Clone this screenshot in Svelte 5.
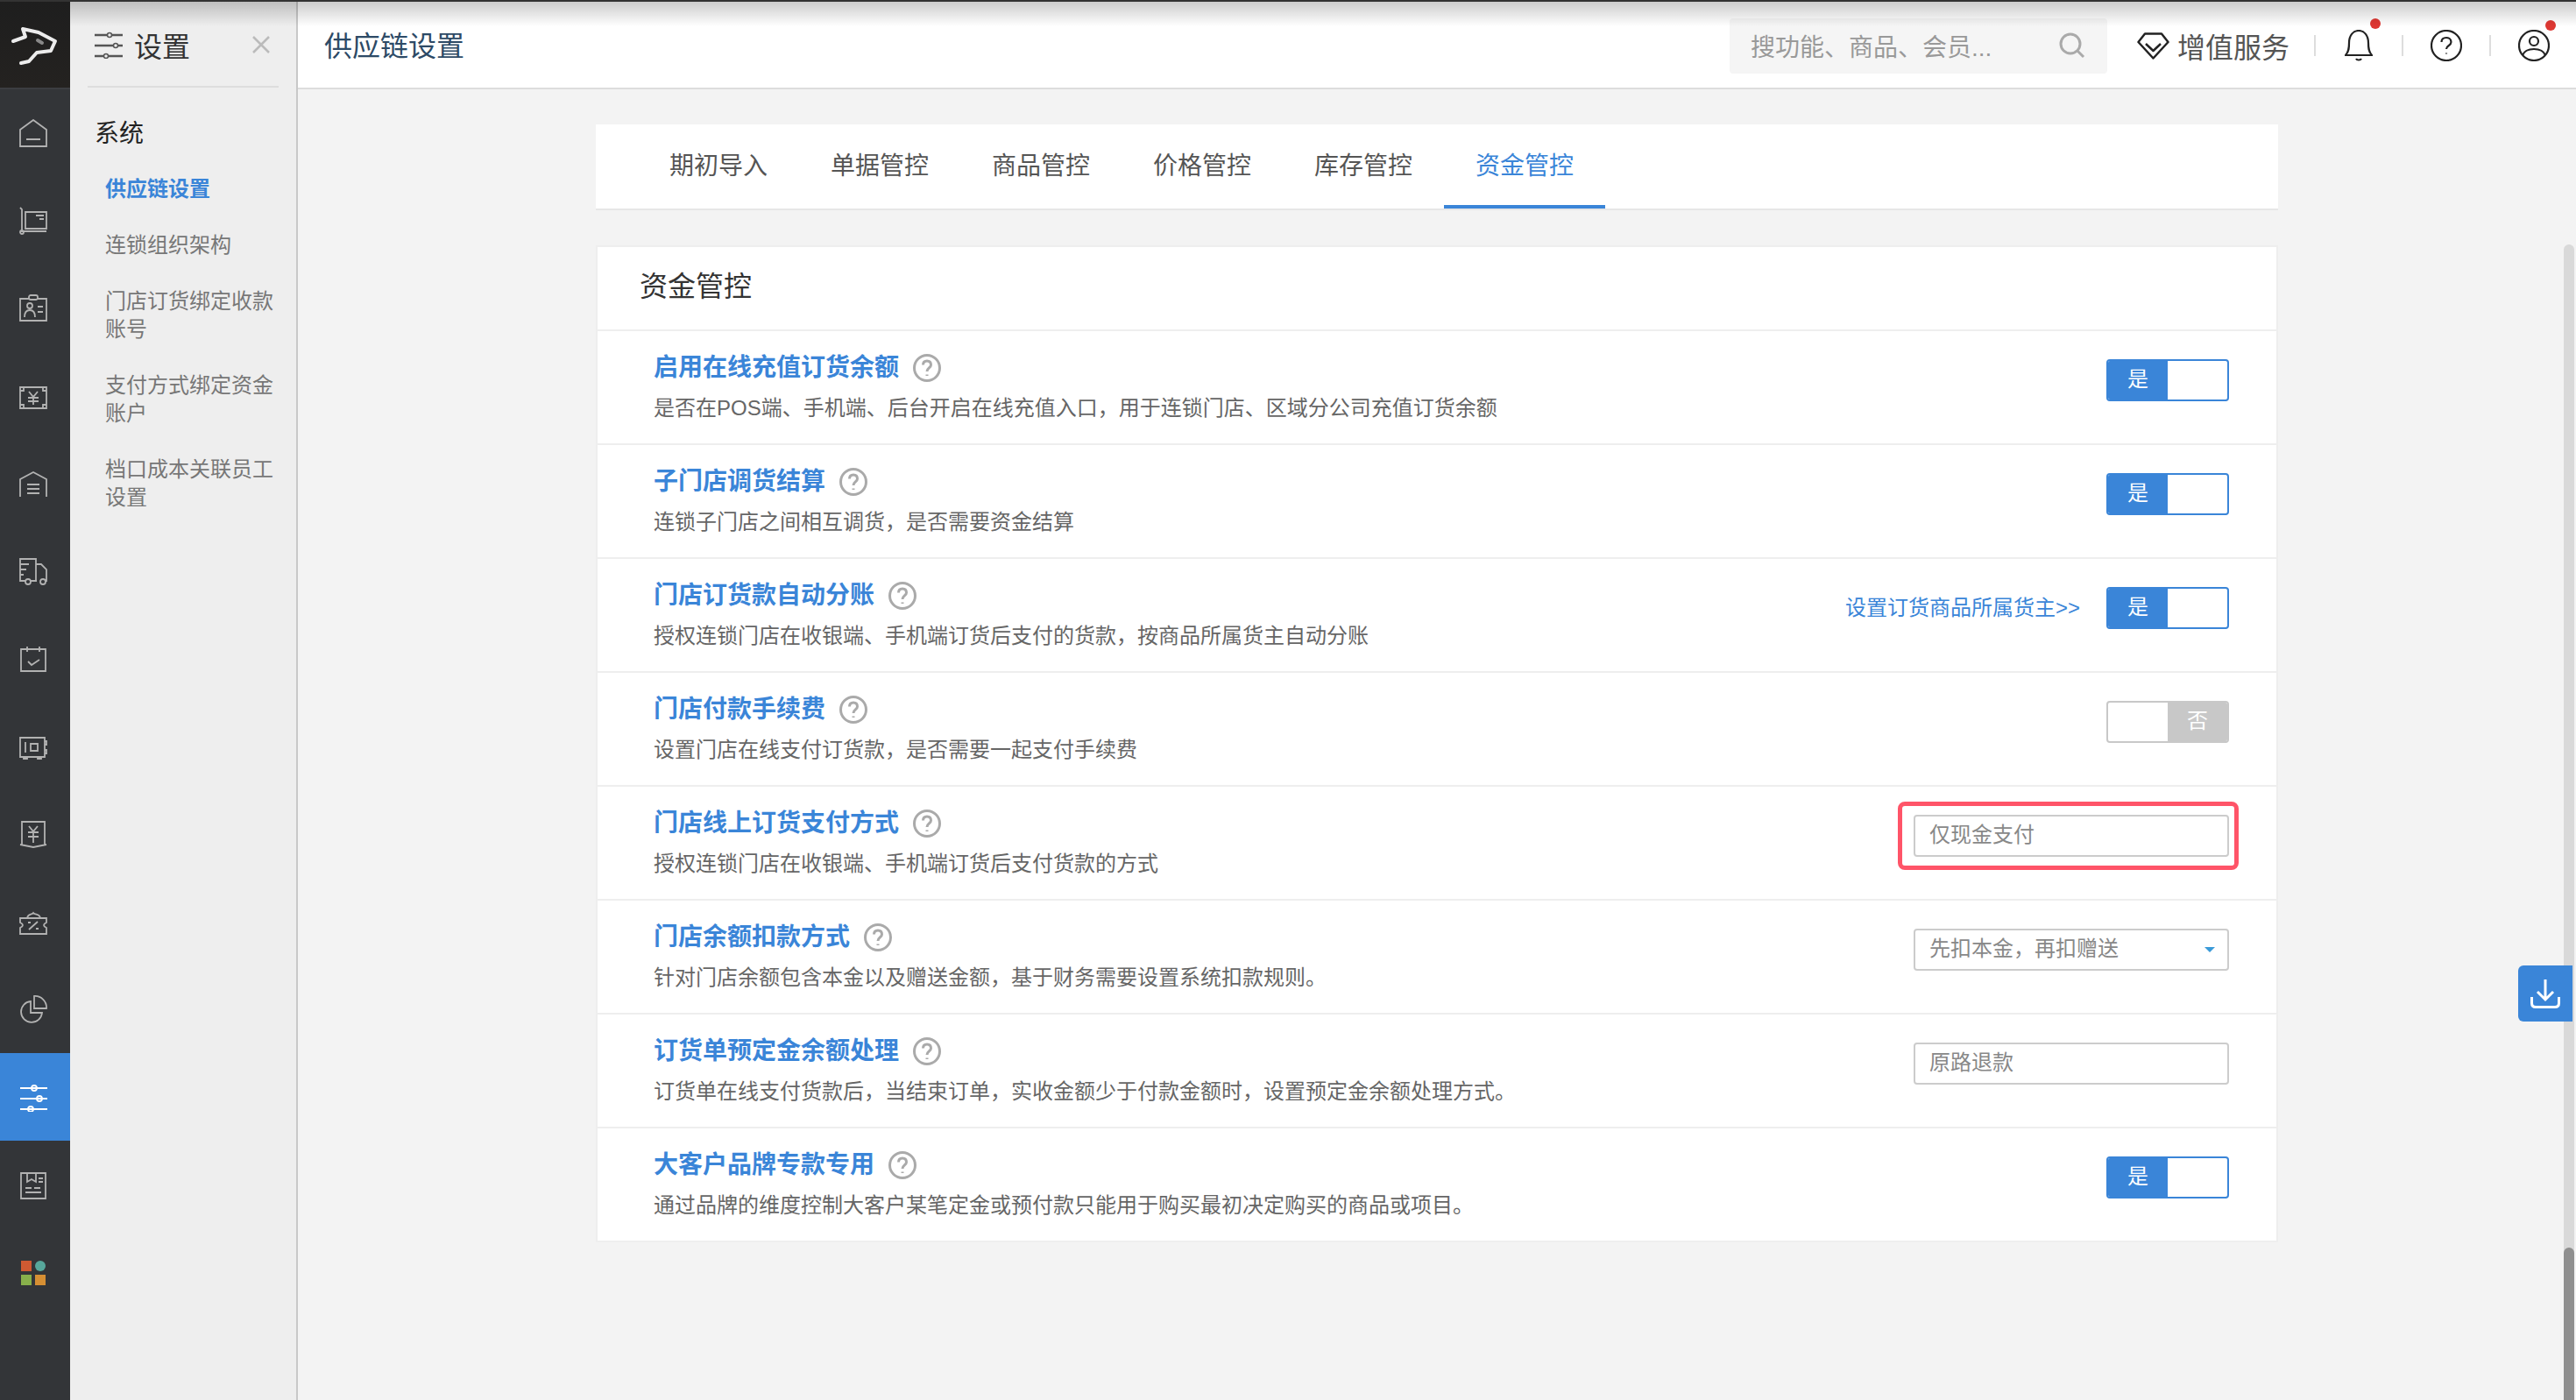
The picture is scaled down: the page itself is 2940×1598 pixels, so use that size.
<script>
  const railIcons = [
    'M1 12 16 1 31 12V31H1ZM8 23H24',
    'M1 1 3 3V28H31M5 29a2 2 0 1 1-4 0 2 2 0 0 1 4 0M7 6H31V25H7ZM19 10H28M23 14H28',
    'M11 5H1V30H31V5H21M11 3a2 2 0 0 1 2-2h6a2 2 0 0 1 2 2v1a2 2 0 0 1-2 2h-6a2 2 0 0 1-2-2ZM15 13a3 3 0 1 1-6 0 3 3 0 0 1 6 0M6 26c0-6 3-8 6-8s6 2 6 8M21 14H27M21 20H27',
    'M1 6H31V30H1ZM1 10H5V6M27 6V10H31M1 26H5V30M27 30V26H31M11 11l5 6 5-6M10 18H22M10 22H22M16 17V26',
    'M1 31V11L16 3 31 11V31M9 17H23M9 22H23M9 27H23',
    'M7 27H1V2H19V27H13M19 8H25L31 14V27H30M19 27H20M1 8H11M1 14H8M1 20H5M13 28a3 3 0 1 1-6 0 3 3 0 0 1 6 0M30 28a3 3 0 1 1-6 0 3 3 0 0 1 6 0',
    'M2 5H30V30H2ZM9 2V8M23 2V8M10 19l4 4 9-6',
    'M1 6H29V28H1ZM29 10H31V14H29M29 20H31V24H29M7 11V23M13 13H21V21H13ZM5 28V30H9V28M21 28V30H25V28',
    'M3 28V2H29V28M1 28 16 31 31 28M11 7l5 6 5-6M10 14H22M10 19H22M16 13V26',
    'M1 12H31V17C27 19 27 21 31 23V30H1V23C5 21 5 19 1 17ZM9 12C10 6 14 9 16 6 18 9 23 6 24 12M11 25 21 16M10 17h3M19 24h3',
    'M13 7A12 12 0 1 0 26 20H13ZM17 1A13 13 0 0 1 31 15H17Z',
    'M1 6H32M1 18H32M1 30H32M20 6a3 3 0 1 1-6 0 3 3 0 0 1 6 0M26 18a3 3 0 1 1-6 0 3 3 0 0 1 6 0M16 30a3 3 0 1 1-6 0 3 3 0 0 1 6 0',
    'M2 3H30V32H2ZM9 3V13L14 10 19 13V3M22 9H27M22 13H27M7 20H14M17 20H24M7 25H25',
  ];
  const activeRail = 11;

  const sideItems = [
    { label: '供应链设置', active: true },
    { label: '连锁组织架构' },
    { label: '门店订货绑定收款账号' },
    { label: '支付方式绑定资金账户' },
    { label: '档口成本关联员工设置' },
  ];

  const tabs = ['期初导入', '单据管控', '商品管控', '价格管控', '库存管控', '资金管控'];
  const activeTab = 5;

  const rows = [
    { title: '启用在线充值订货余额', desc: '是否在POS端、手机端、后台开启在线充值入口，用于连锁门店、区域分公司充值订货余额', type: 'on' },
    { title: '子门店调货结算', desc: '连锁子门店之间相互调货，是否需要资金结算', type: 'on' },
    { title: '门店订货款自动分账', desc: '授权连锁门店在收银端、手机端订货后支付的货款，按商品所属货主自动分账', type: 'on', link: '设置订货商品所属货主>>' },
    { title: '门店付款手续费', desc: '设置门店在线支付订货款，是否需要一起支付手续费', type: 'off' },
    { title: '门店线上订货支付方式', desc: '授权连锁门店在收银端、手机端订货后支付货款的方式', type: 'field', value: '仅现金支付', marked: true },
    { title: '门店余额扣款方式', desc: '针对门店余额包含本金以及赠送金额，基于财务需要设置系统扣款规则。', type: 'select', value: '先扣本金，再扣赠送' },
    { title: '订货单预定金余额处理', desc: '订货单在线支付货款后，当结束订单，实收金额少于付款金额时，设置预定金余额处理方式。', type: 'field', value: '原路退款' },
    { title: '大客户品牌专款专用', desc: '通过品牌的维度控制大客户某笔定金或预付款只能用于购买最初决定购买的商品或项目。', type: 'on' },
  ];
</script>

<div class="app">
  <nav class="rail">
    <div class="logo">
      <svg viewBox="0 0 80 100" width="80" height="100">
        <path d="M15 47 29 42 26 33 44 37 63 47 58 58 42 60 33 70 24 72" />
        <path class="eye" d="M43 46 48 49" />
      </svg>
    </div>
    {#each railIcons as d, i}
      <div class="rail-item" class:active={i === activeRail}>
        <svg viewBox="0 0 33 33" width="33" height="33"><path {d} /></svg>
      </div>
    {/each}
    <div class="rail-item">
      <svg viewBox="0 0 32 32" width="32" height="32" class="apps">
        <rect x="2" y="3" width="12" height="12" fill="#cf5a32" />
        <ellipse cx="24" cy="9" rx="6" ry="6" fill="#57a79b" />
        <rect x="2" y="19" width="12" height="12" fill="#88b04b" />
        <rect x="18" y="19" width="12" height="12" fill="#d68f33" />
      </svg>
    </div>
  </nav>

  <aside class="sidebar">
    <div class="side-head">
      <svg class="side-icon" viewBox="0 0 32 32" width="32" height="32">
        <path d="M0 5H32M0 17H32M0 29H32" />
        <circle cx="17" cy="5" r="2.500" />
        <circle cx="24" cy="17" r="2.500" />
        <circle cx="13" cy="29" r="2.500" />
      </svg>
      <span class="side-title">设置</span>
      <svg class="side-close" viewBox="0 0 20 20" width="20" height="20"><path d="M1 1 19 19M19 1 1 19" /></svg>
    </div>
    <div class="side-section">系统</div>
    <ul class="side-list">
      {#each sideItems as item}
        <li class:active={item.active}>{item.label}</li>
      {/each}
    </ul>
  </aside>

  <div class="main">
    <header class="topbar">
      <h1>供应链设置</h1>
      <div class="search">
        <span>搜功能、商品、会员...</span>
        <svg viewBox="0 0 30 30" width="30" height="30"><path d="M24 13a11 11 0 1 1-22 0 11 11 0 0 1 22 0M21 21 28 28" /></svg>
      </div>
      <div class="service">
        <svg viewBox="0 0 37 31" width="37" height="31"><path d="M9 1.5H28L35.5 11 18.5 29.5 1.5 11ZM10 13 18.5 21 27 13" /></svg>
        <span>增值服务</span>
      </div>
      <i class="sep"></i>
      <div class="tool">
        <span class="tool-icon">
          <svg viewBox="0 0 32 36" width="32" height="36"><path d="M1 29C5 25 5 20 5 15 5 6 10 1 16 1S27 6 27 15C27 20 27 25 31 29ZM13 33C14 35 18 35 19 33" /></svg>
          <b class="dot bell-dot"></b>
        </span>
      </div>
      <i class="sep"></i>
      <div class="tool">
        <span class="tool-icon">
          <svg viewBox="0 0 36 36" width="36" height="36"><circle cx="18" cy="18" r="17" /><path d="M12.5 14C12.5 10.5 15 9 18 9S23.500 11 23.500 14C23.500 18 18 18 18 22" /><path d="M18 26.500V27.500" /></svg>
        </span>
      </div>
      <i class="sep"></i>
      <div class="tool last">
        <span class="tool-icon">
          <svg viewBox="0 0 36 36" width="36" height="36"><circle cx="18" cy="18" r="17" /><circle cx="18" cy="13" r="5" /><path d="M5 29C7 24 12 22 18 22S29 24 31 29" /></svg>
          <b class="dot user-dot"></b>
        </span>
      </div>
    </header>

    <div class="content">
      <div class="tabs">
        {#each tabs as tab, i}
          <div class="tab" class:active={i === activeTab}>{tab}</div>
        {/each}
      </div>

      <section class="panel">
        <h2>资金管控</h2>
        {#each rows as row}
          <div class="row">
            <div class="row-text">
              <div class="row-title">
                <span>{row.title}</span>
                <svg viewBox="0 0 32 32" width="32" height="32">
                  <circle cx="16" cy="16" r="14.500" />
                  <path d="M11.500 12.500C11.500 9.500 13.500 8 16 8S20.500 9.500 20.500 12.500C20.500 16 16 16 16 20M16 23.500V25" />
                </svg>
              </div>
              <div class="row-desc">{row.desc}</div>
            </div>
            <div class="row-control">
              {#if row.link}
                <span class="row-link">{row.link}</span>
              {/if}
              {#if row.type === 'on'}
                <div class="toggle on"><span>是</span><span></span></div>
              {:else if row.type === 'off'}
                <div class="toggle off"><span></span><span>否</span></div>
              {:else}
                <div class="field" class:marked={row.marked}>
                  {row.value}
                  {#if row.type === 'select'}<i class="caret"></i>{/if}
                </div>
              {/if}
            </div>
          </div>
        {/each}
      </section>
    </div>

    <div class="scroll-track"><div class="scroll-thumb"></div></div>
    <div class="download">
      <svg viewBox="0 0 34 34" width="34" height="34"><path d="M17 1V23M8 15 17 24 26 15M1.500 21V28C1.500 31 3 32.500 6 32.500H28C31 32.500 32.500 31 32.500 28V21" /></svg>
    </div>
  </div>

  <div class="top-strip"></div>
  <div class="top-shade"></div>
</div>

<style>
  :global(body) {
    margin: 0;
    background: #f3f3f3;
    font-family: "Liberation Sans", "Noto Sans CJK SC", sans-serif;
  }

  .app {
    display: flex;
    height: 100vh;
    overflow: hidden;
    position: relative;
  }

  .top-strip {
    position: absolute;
    top: 0;
    left: 0;
    right: 0;
    height: 2px;
    background: #333;
  }

  .top-shade {
    position: absolute;
    top: 2px;
    left: 80px;
    right: 0;
    height: 28px;
    background: linear-gradient(to bottom, rgba(0, 0, 0, 0.2), rgba(0, 0, 0, 0));
    pointer-events: none;
  }

  /* icon rail */
  .rail {
    width: 80px;
    flex: none;
    background: #333538;
  }

  .logo {
    height: 100px;
    margin-bottom: 2px;
    background: linear-gradient(to bottom, #1e1e1e, #242220);
    box-shadow: 0 2px 0 #3c3e41;
  }

  .logo svg {
    display: block;
  }

  .logo path {
    fill: none;
    stroke: #ececec;
    stroke-width: 4;
    stroke-linejoin: round;
    stroke-linecap: round;
  }

  .logo path.eye {
    stroke: #888;
  }

  .rail-item {
    height: 100px;
    display: flex;
    align-items: center;
    justify-content: center;
    padding-right: 4px;
    box-sizing: border-box;
  }

  .rail-item path {
    fill: none;
    stroke: #b2b2b2;
    stroke-width: 1.8;
  }

  .rail-item.active {
    background: #3a85d8;
  }

  .rail-item.active path {
    stroke: #fff;
  }

  /* second level sidebar */
  .sidebar {
    width: 260px;
    flex: none;
    box-sizing: border-box;
    background: #eee;
    border-right: 2px solid #c8c8c8;
  }

  .side-head {
    height: 100px;
    margin: 0 20px;
    padding: 4px 10px 0 8px;
    box-sizing: border-box;
    display: flex;
    align-items: center;
    border-bottom: 2px solid #ddd;
  }

  .side-icon path {
    fill: none;
    stroke: #555;
    stroke-width: 2.500;
  }

  .side-icon circle {
    fill: #eee;
    stroke: #555;
    stroke-width: 1.500;
  }

  .side-title {
    margin-left: 13px;
    font-size: 32px;
    color: #333;
  }

  .side-close {
    margin-left: auto;
  }

  .side-close path {
    fill: none;
    stroke: #bbb;
    stroke-width: 2.500;
  }

  .side-section {
    margin: 35px 0 29px 28px;
    font-size: 28px;
    line-height: 36px;
    color: #222;
  }

  .side-list {
    list-style: none;
    margin: 0;
    padding: 0 18px 0 40px;
    font-size: 24px;
    line-height: 32px;
    color: #777;
  }

  .side-list li {
    margin-bottom: 32px;
  }

  .side-list li.active {
    color: #3a85d8;
    font-weight: 700;
  }

  /* main area */
  .main {
    flex: 1;
    min-width: 0;
    position: relative;
  }

  .topbar {
    height: 102px;
    box-sizing: border-box;
    padding: 4px 0 0 30px;
    display: flex;
    align-items: center;
    background: #fff;
    border-bottom: 2px solid #ddd;
  }

  .topbar h1 {
    margin: 0;
    font-size: 32px;
    font-weight: 400;
    color: #2d4a66;
    position: relative;
    top: -2px;
  }

  .search {
    margin-left: auto;
    width: 431px;
    height: 63px;
    box-sizing: border-box;
    padding: 0 25px 0 24px;
    display: flex;
    align-items: center;
    justify-content: space-between;
    background: #f5f5f5;
    border-radius: 4px;
    font-size: 28px;
    color: #999;
  }

  .search path {
    fill: none;
    stroke: #aaa;
    stroke-width: 3;
  }

  .service {
    margin-left: 34px;
    display: flex;
    align-items: center;
    gap: 9px;
    font-size: 32px;
    color: #555;
  }

  .service path {
    fill: none;
    stroke: #222;
    stroke-width: 2.500;
    stroke-linejoin: round;
  }

  .sep {
    width: 2px;
    height: 24px;
    background: #ddd;
    flex: none;
  }

  .service + .sep {
    margin-left: 28px;
  }

  .tool {
    width: 98px;
    display: flex;
    justify-content: center;
  }

  .tool.last {
    width: 97px;
  }

  .tool-icon {
    position: relative;
    display: flex;
  }

  .tool svg * {
    fill: none;
    stroke: #222;
    stroke-width: 2.200;
  }

  .dot {
    position: absolute;
    width: 12px;
    height: 12px;
    border-radius: 50%;
    background: #dd3732;
  }

  .bell-dot {
    left: 29px;
    top: -13px;
  }

  .user-dot {
    left: 31px;
    top: -11px;
  }

  .content {
    padding-top: 40px;
  }

  .tabs {
    width: 1920px;
    height: 98px;
    margin: 0 auto 40px;
    padding-left: 48px;
    box-sizing: border-box;
    display: flex;
    background: #fff;
    border-bottom: 2px solid #e6e6e6;
  }

  .tab {
    height: 96px;
    box-sizing: border-box;
    padding: 0 36px;
    line-height: 96px;
    font-size: 28px;
    color: #555;
  }

  .tab.active {
    color: #3a85d8;
    border-bottom: 4px solid #3a85d8;
  }

  .panel {
    width: 1920px;
    margin: 0 auto;
    box-sizing: border-box;
    background: #fff;
    border: 2px solid #eee;
    border-bottom: 0;
  }

  .panel h2 {
    margin: 0;
    height: 96px;
    box-sizing: border-box;
    padding: 22px 0 0 48px;
    font-size: 32px;
    line-height: 46px;
    font-weight: 400;
    color: #333;
    border-bottom: 2px solid #eee;
  }

  .row {
    height: 130px;
    box-sizing: border-box;
    padding: 0 54px 0 64px;
    display: flex;
    justify-content: space-between;
    border-bottom: 2px solid #eee;
  }

  .row-title {
    margin-top: 22px;
    display: flex;
    align-items: center;
    gap: 16px;
    font-size: 28px;
    line-height: 40px;
    font-weight: 700;
    color: #3a85d8;
  }

  .row-title circle,
  .row-title path {
    fill: none;
    stroke: #aaa;
    stroke-width: 3;
  }

  .row-desc {
    margin-top: 10px;
    font-size: 24px;
    line-height: 32px;
    color: #666;
  }

  .row-control {
    margin-top: 32px;
    display: flex;
    align-items: flex-start;
    gap: 30px;
  }

  .row-link {
    font-size: 24px;
    line-height: 48px;
    color: #3a85d8;
  }

  .toggle {
    width: 140px;
    height: 48px;
    box-sizing: border-box;
    display: flex;
    border: 2px solid;
    border-radius: 4px;
    overflow: hidden;
  }

  .toggle span {
    flex: 1;
    text-align: center;
    font-size: 24px;
    line-height: 42px;
    color: #fff;
  }

  .toggle.on {
    border-color: #3a85d8;
  }

  .toggle.on span:first-child {
    background: #3a85d8;
  }

  .toggle.off {
    border-color: #c8c8c8;
  }

  .toggle.off span:last-child {
    background: #c8c8c8;
  }

  .field {
    position: relative;
    width: 360px;
    height: 48px;
    box-sizing: border-box;
    padding: 0 16px;
    border: 2px solid #ccc;
    border-radius: 4px;
    font-size: 24px;
    line-height: 42px;
    color: #888;
  }

  .field.marked::after {
    content: "";
    position: absolute;
    top: -17px;
    bottom: -17px;
    left: -20px;
    right: -13px;
    border: 5px solid #ff5468;
    border-radius: 8px;
  }

  .caret {
    position: absolute;
    right: 14px;
    top: 19px;
    border-top: 6px solid #3a9ad8;
    border-left: 6px solid transparent;
    border-right: 6px solid transparent;
  }

  .scroll-track {
    position: absolute;
    top: 279px;
    right: 2px;
    bottom: 0;
    width: 12px;
    background: #d9d9d9;
    border-radius: 6px 6px 0 0;
  }

  .scroll-thumb {
    position: absolute;
    top: 1145px;
    left: 0;
    right: 0;
    bottom: 0;
    background: #8f8f8f;
    border-radius: 6px 6px 0 0;
  }

  .download {
    position: absolute;
    top: 1102px;
    right: 4px;
    width: 62px;
    height: 64px;
    display: flex;
    align-items: center;
    justify-content: center;
    background: #3a85d8;
    border-radius: 6px 0 0 6px;
  }

  .download path {
    fill: none;
    stroke: #fff;
    stroke-width: 3;
  }
</style>
